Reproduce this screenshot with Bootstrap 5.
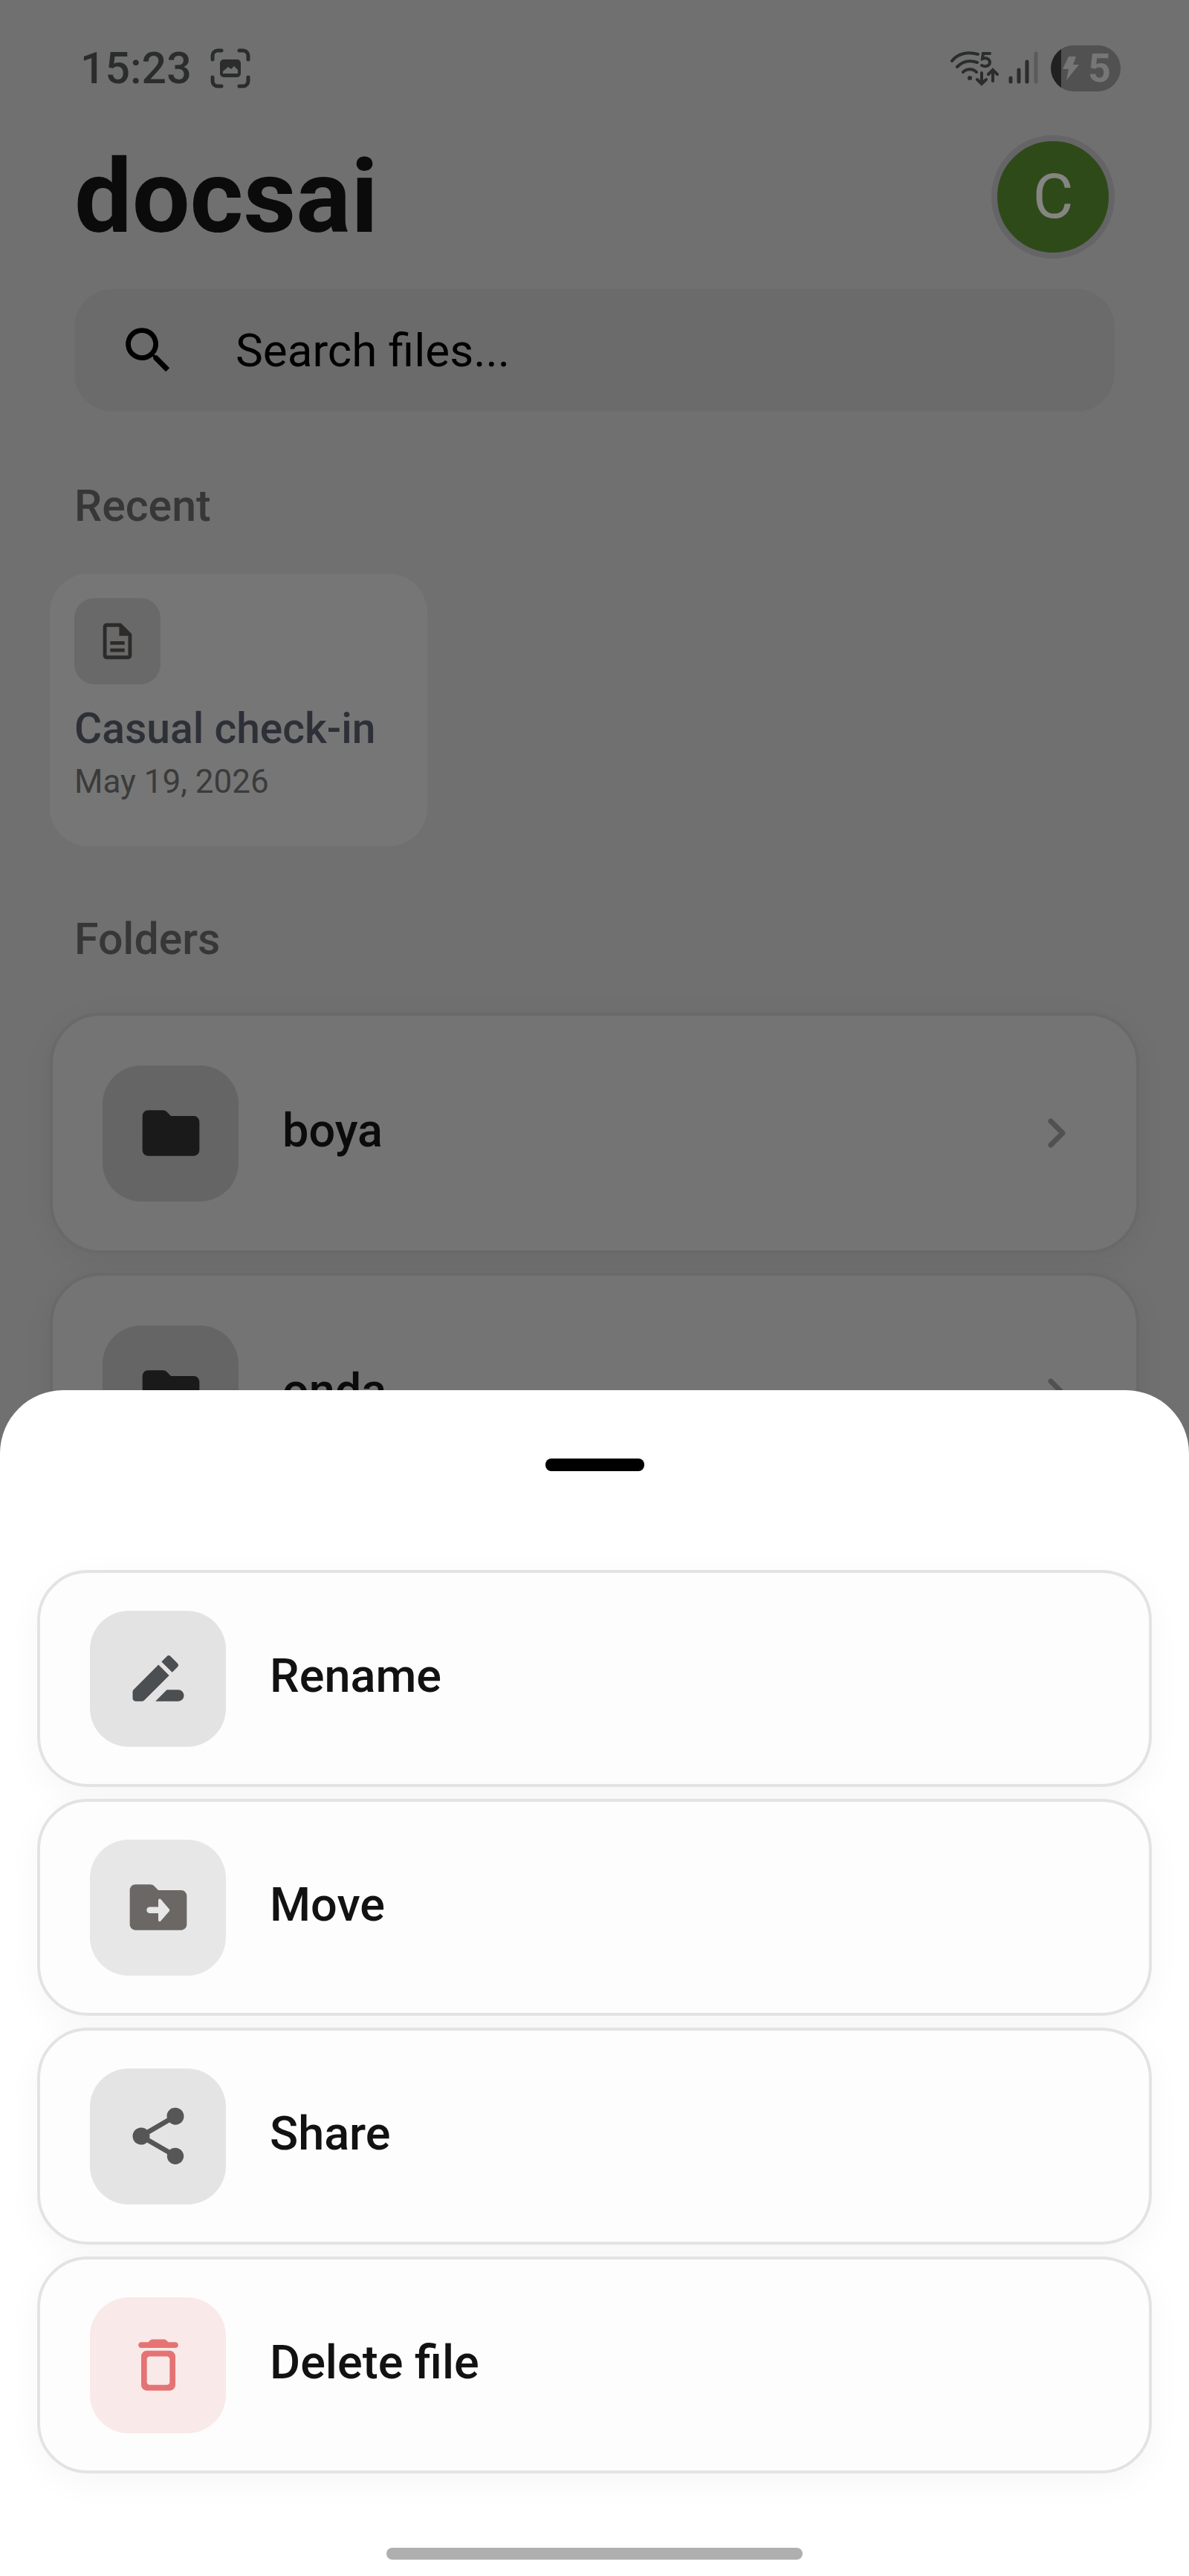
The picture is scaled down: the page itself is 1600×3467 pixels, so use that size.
<!DOCTYPE html>
<html lang="en">
<head>
<meta charset="utf-8">
<meta name="viewport" content="width=device-width, initial-scale=1">
<title>docsai</title>
<link href="https://cdn.jsdelivr.net/npm/bootstrap@5.3.0/dist/css/bootstrap.min.css" rel="stylesheet">
<style>
  body { font-family: Roboto, "Liberation Sans", sans-serif; font-variant-ligatures: none; background: #707070; color: #0b0b0b; }
  svg { display: block; flex: none; }
  .screen { height: 100vh; }
  .status-bar { padding: 60px 92px 0 108px; height: 124px; color: #2b2c2c; }
  .clock { font-size: 59px; line-height: 72px; font-weight: 500; }
  .battery-pill { width: 94px; height: 62px; border-radius: 31px; color: #767676; font-size: 54px; line-height: 62px; font-weight: 700;
    background: linear-gradient(90deg, #212121 14px, #515151 14px); }
  .app-head { padding: 58px 100px 0; }
  .brand { font-size: 138px; line-height: 166px; font-weight: 700; color: #0b0b0b; }
  .avatar { width: 166px; height: 166px; border: 8px solid #656568; background: #2f4a19; color: #858583; font-size: 84px; line-height: 150px; }
  .search-box { margin: 41px 100px 0; height: 165px; padding: 0 59px; gap: 77px; border-radius: 52px; background: #6a6b6a; color: #000; }
  .search-box input { font-size: 62px; line-height: 72px; color: #000; background: none; outline: 0; }
  .search-box input::placeholder { color: #000; opacity: 1; }
  .section-title { padding-left: 100px; font-size: 59px; line-height: 72px; font-weight: 500; color: #363736; margin: 0; }
  .recent-title { margin-top: 91px; }
  .folders-title { margin-top: 89px; }
  .recent-file { width: 508px; height: 367px; margin: 55px 0 0 67px; padding: 33px; border-radius: 52px; background: #767676; color: #343434; }
  .recent-file:hover { color: #343434; }
  .doc-tile { width: 116px; height: 116px; border-radius: 27px; background: #696969; color: #2c2b29; }
  .doc-name { margin-top: 28px; font-size: 57px; line-height: 64px; font-weight: 500; color: #2e3038; }
  .doc-date { font-size: 44px; line-height: 52px; margin-top: 13px; color: #3b3b3b; }
  .folder-list { padding: 0 67px; margin-top: 63px; gap: 26px; }
  .tile-row { display: flex; align-items: center; width: 100%; gap: 59px; padding: 0 67px; border-radius: 68px; font-size: 63px; font-weight: 500; line-height: 72px; text-align: left; }
  .tile-row span { padding-bottom: 6px; }
  .tile { width: 183px; height: 183px; border-radius: 52px; display: flex; align-items: center; justify-content: center; flex: none; }
  .folder-row { height: 324px; border: 4px solid #696969; background: #747474; color: #0b0b0b; box-shadow: 0 8px 40px rgba(0,0,0,.05); }
  .folder-row .tile { background: #656565; color: #1a1a1a; }
  .sheet { background: #fff; border-radius: 85px 85px 0 0; padding: 92px 50px 22px; }
  .handle { width: 133px; height: 17px; border-radius: 8px; background: #000; }
  .actions { margin-top: 133px; gap: 16px; }
  .action { height: 292px; border: 4px solid #e3e3e3; background: #fdfdfd; color: #121212; box-shadow: 0 12px 48px rgba(0,0,0,.04); }
  .tile-rename { background: #e3e3e3; color: #4b4f52; }
  .tile-move { background: #e7e7e7; color: #6a6764; }
  .tile-share { background: #e4e4e4; color: #565656; }
  .tile-delete { background: #fae9e9; color: #e57373; }
  .home-bar { width: 560px; height: 16px; border-radius: 8px; background: #afafaf; margin-top: 100px; }
</style>
</head>
<body>
<div class="screen overflow-hidden">
  <div class="status-bar d-flex align-items-center justify-content-between">
    <div class="d-flex align-items-center">
      <div class="clock">15:23</div>
      <svg class="ms-4" width="56" height="56" viewBox="0 0 56 56" fill="none" stroke="currentColor" stroke-width="5" stroke-linecap="round">
        <path d="M4 16V11a7 7 0 0 1 7-7h5M40 4h5a7 7 0 0 1 7 7v5M52 40v5a7 7 0 0 1-7 7h-5M16 52h-5a7 7 0 0 1-7-7v-5"/>
        <path fill="currentColor" stroke="none" fill-rule="evenodd" d="M19 16h18a5 5 0 0 1 5 5v14a5 5 0 0 1-5 5H19a5 5 0 0 1-5-5V21a5 5 0 0 1 5-5zM18 35h20v-5l-5-5-4 4-4-3-7 6z"/>
      </svg>
    </div>
    <div class="d-flex align-items-center">
      <svg width="66" height="50" viewBox="0 0 66 50" fill="none" stroke="currentColor" stroke-width="4" stroke-linecap="round">
        <path d="M3 15C11 5 24 2 38 6M10 23c8-8 18-9 27-6M18 30c5-5 13-5 18 0M43 31v15M37 40l6 6 6-6M58 42V27M52 33l6-6 6 6"/>
        <circle cx="27" cy="38" r="3" fill="currentColor" stroke="none"/>
        <path d="M54 5H45l-1 7c6-2 10 1 10 5s-5 7-11 4"/>
      </svg>
      <svg class="ms-2" width="46" height="50" viewBox="0 0 46 50" fill="none" stroke="currentColor" stroke-width="5" stroke-linecap="round">
        <path d="M8 38v5M19 27v16M30 16v27"/><path stroke="#5b5b5b" d="M42 5v38"/>
      </svg>
      <div class="battery-pill d-flex align-items-center ms-3">
        <svg class="ms-3" width="22" height="34" viewBox="0 0 22 34" fill="currentColor"><path d="M8 1h10l-4 11h8L5 33l3-15H0z"/></svg>
        <div class="ms-2 ps-1">5</div>
      </div>
    </div>
  </div>

  <header class="app-head d-flex align-items-center justify-content-between">
    <h1 class="brand m-0">docsai</h1>
    <button type="button" class="avatar btn rounded-circle p-0" aria-label="Account">C</button>
  </header>

  <div class="search-box d-flex align-items-center">
    <svg width="81" height="81" viewBox="0 0 24 24" fill="currentColor"><path d="M15.500 14h-.79l-.28-.27A6.470 6.470 0 0 0 16 9.500 6.500 6.500 0 1 0 9.500 16c1.610 0 3.090-.59 4.230-1.570l.27.28v.79l5 4.990L20.490 19zm-6 0C7.010 14 5 11.990 5 9.500S7.010 5 9.500 5 14 7.010 14 9.500 11.990 14 9.500 14"/></svg>
    <input type="search" class="border-0 p-0 flex-grow-1" placeholder="Search files..." aria-label="Search files">
  </div>

  <h2 class="section-title recent-title">Recent</h2>
  <a href="#" class="recent-file d-block text-decoration-none">
    <div class="doc-tile d-flex align-items-center justify-content-center">
      <svg width="58" height="58" viewBox="0 0 24 24" fill="currentColor"><path d="M8 16h8v2H8zm0-4h8v2H8zm6-10H6c-1.100 0-2 .9-2 2v16c0 1.100.89 2 1.990 2H18c1.100 0 2-.9 2-2V8zm4 18H6V4h7v5h5z"/></svg>
    </div>
    <div class="doc-name">Casual check-in</div>
    <div class="doc-date">May 19, 2026</div>
  </a>

  <h2 class="section-title folders-title">Folders</h2>
  <div class="folder-list d-flex flex-column">
    <button type="button" class="tile-row folder-row">
      <div class="tile"><svg width="92" height="92" viewBox="0 0 24 24" fill="currentColor"><path d="M10.590 4.590C10.210 4.210 9.700 4 9.170 4H4c-1.100 0-1.990.9-1.990 2L2 18c0 1.100.9 2 2 2h16c1.100 0 2-.9 2-2V8c0-1.100-.9-2-2-2h-8z"/></svg></div>
      <span class="flex-grow-1">boya</span>
      <svg width="80" height="80" viewBox="0 0 80 80" fill="none" stroke="#515151" stroke-width="7" stroke-linecap="round" stroke-linejoin="round"><path d="M32 24l16 16-16 16"/></svg>
    </button>
    <button type="button" class="tile-row folder-row">
      <div class="tile"><svg width="92" height="92" viewBox="0 0 24 24" fill="currentColor"><path d="M10.590 4.590C10.210 4.210 9.700 4 9.170 4H4c-1.100 0-1.990.9-1.990 2L2 18c0 1.100.9 2 2 2h16c1.100 0 2-.9 2-2V8c0-1.100-.9-2-2-2h-8z"/></svg></div>
      <span class="flex-grow-1">onda</span>
      <svg width="80" height="80" viewBox="0 0 80 80" fill="none" stroke="#515151" stroke-width="7" stroke-linecap="round" stroke-linejoin="round"><path d="M32 24l16 16-16 16"/></svg>
    </button>
  </div>
</div>

<div class="sheet fixed-bottom" role="dialog" aria-label="File actions">
  <div class="handle mx-auto"></div>
  <div class="actions d-flex flex-column">
    <button type="button" class="tile-row action">
      <div class="tile tile-rename"><svg width="92" height="92" viewBox="0 0 24 24" fill="currentColor"><path d="M15 16l-4 4h8c1.100 0 2-.9 2-2s-.9-2-2-2zM12.060 7.190L3.290 15.960C3.110 16.140 3 16.400 3 16.660V19c0 .55.45 1 1 1h2.340c.27 0 .52-.11.71-.29l8.770-8.770zM18.710 8.040a1 1 0 0 0 0-1.410l-2.340-2.340a1 1 0 0 0-1.410 0l-1.830 1.830 3.750 3.750z"/></svg></div>
      <span>Rename</span>
    </button>
    <button type="button" class="tile-row action">
      <div class="tile tile-move"><svg width="92" height="92" viewBox="0 0 24 24" fill="currentColor"><path fill-rule="evenodd" d="M20 6h-8l-1.410-1.410C10.210 4.210 9.700 4 9.170 4H4c-1.100 0-2 .9-2 2v12c0 1.100.9 2 2 2h16c1.100 0 2-.9 2-2V8c0-1.100-.9-2-2-2zm-8 10.500V14.100H9c-.55 0-1.100-.45-1.100-1.100s.55-1.100 1.100-1.100h3V9.500c0-.45.54-.67.85-.35l3 3.500c.2.200.2.500 0 .7l-3 3.500c-.31.300-.85.100-.85-.35z"/></svg></div>
      <span>Move</span>
    </button>
    <button type="button" class="tile-row action">
      <div class="tile tile-share"><svg width="92" height="92" viewBox="0 0 24 24" fill="currentColor"><path d="M18 16.080c-.76 0-1.440.3-1.960.77L8.910 12.700c.05-.23.09-.46.09-.7s-.04-.47-.09-.7l7.050-4.110c.54.5 1.250.81 2.040.81 1.660 0 3-1.340 3-3s-1.340-3-3-3-3 1.340-3 3c0 .24.04.47.09.7L8.040 9.810C7.500 9.310 6.790 9 6 9c-1.660 0-3 1.340-3 3s1.340 3 3 3c.79 0 1.500-.31 2.040-.81l7.120 4.160c-.05.21-.08.43-.08.65 0 1.610 1.310 2.920 2.920 2.920s2.920-1.310 2.920-2.920-1.310-2.920-2.920-2.920"/></svg></div>
      <span>Share</span>
    </button>
    <button type="button" class="tile-row action">
      <div class="tile tile-delete"><svg width="92" height="92" viewBox="0 0 24 24" fill="currentColor"><path fill-rule="evenodd" d="M6 19c0 1.100.9 2 2 2h8c1.100 0 2-.9 2-2V9c0-1.100-.9-2-2-2H8c-1.100 0-2 .9-2 2zm3-10h6c.55 0 1 .45 1 1v8c0 .55-.45 1-1 1H9c-.55 0-1-.45-1-1v-8c0-.55.45-1 1-1zM15.500 4l-.71-.71c-.18-.18-.44-.29-.7-.29H9.910c-.26 0-.52.11-.7.29L8.500 4H6c-.55 0-1 .45-1 1s.45 1 1 1h12c.55 0 1-.45 1-1s-.45-1-1-1z"/></svg></div>
      <span>Delete file</span>
    </button>
  </div>
  <div class="home-bar mx-auto"></div>
</div>
<script src="https://cdn.jsdelivr.net/npm/bootstrap@5.3.0/dist/js/bootstrap.bundle.min.js"></script>
</body>
</html>
